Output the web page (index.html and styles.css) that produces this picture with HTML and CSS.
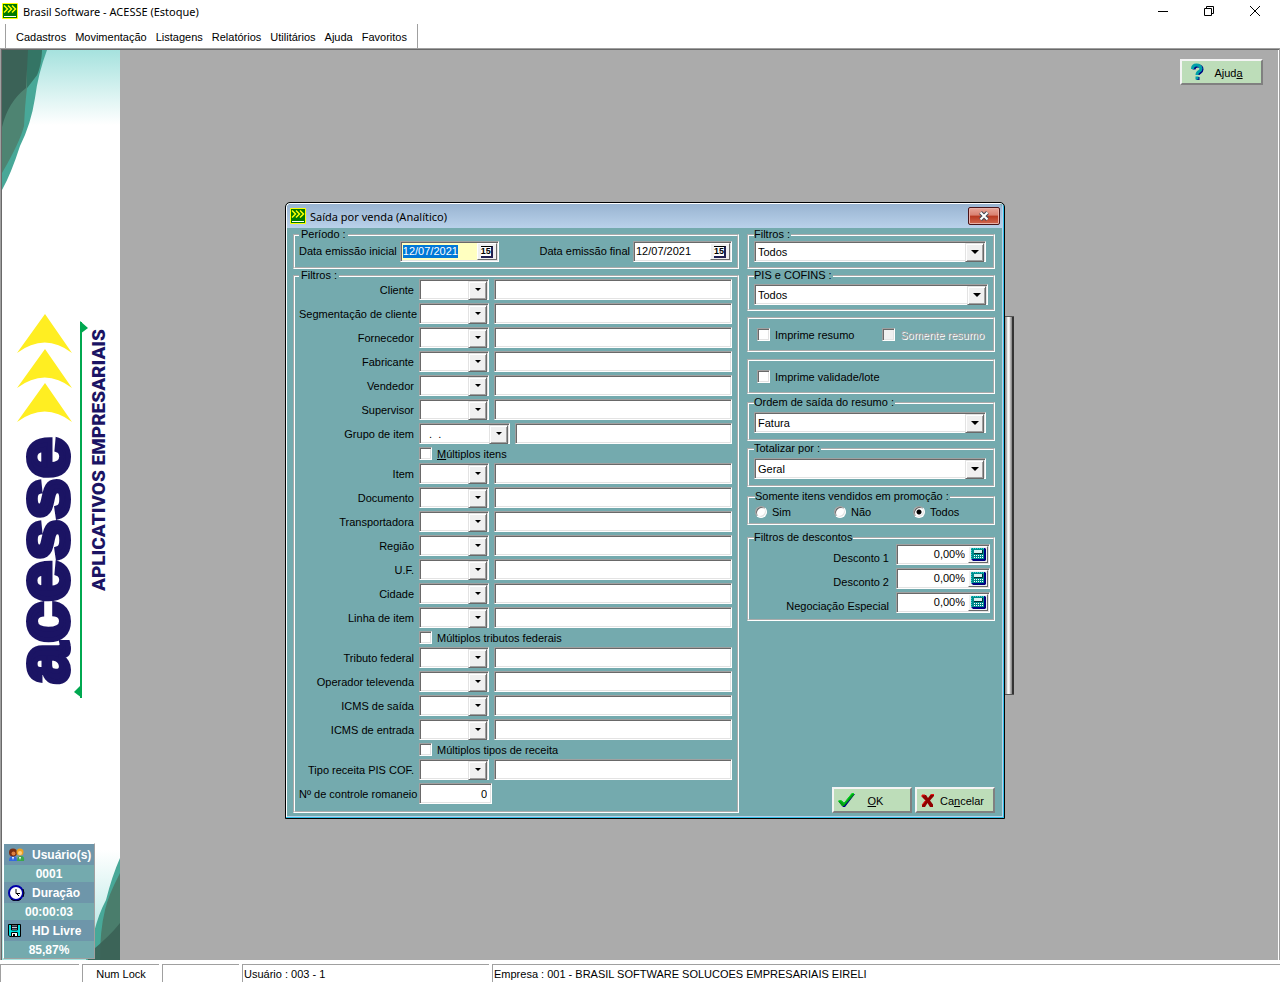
FILE: index.html
```html
<!DOCTYPE html>
<html lang="pt-BR">
<head>
<meta charset="UTF-8" />
<meta name="viewport" content="width=device-width, initial-scale=1" />
<title>Brasil Software - ACESSE (Estoque)</title>
<link rel="stylesheet" href="styles.css">
</head>
<body>
  <svg class="defs" aria-hidden="true">
    <symbol id="logo" viewBox="0 0 16 16">
      <rect width="16" height="16" rx="1" fill="#ff0"/>
      <rect x="1" y="1" width="14" height="14" fill="#007a00"/>
      <path d="M2 2.500l3.500 3.500L2 9.500M6 2.500l3.500 3.500L6 9.500M10 2.500l3.500 3.500L10 9.500" fill="none" stroke="#ff0" stroke-width="1.500"/>
      <path d="M2 13.500h12" stroke="#fff"/>
    </symbol>
    <symbol id="calc" viewBox="0 0 15 13">
      <path d="M1 0h13l1 1v11l-1 1H2l-2-2V1z" fill="#000080"/>
      <path d="M0 0h13v11H0z" fill="#008c8c"/>
      <path d="M0.500 11V0.500H13" fill="none" stroke="#30d0d0" stroke-dasharray="1 1"/>
      <path d="M3 2h8v3H3z" fill="#d8f0f0"/>
      <path d="M3 5.500h8.500V2" fill="none" stroke="#003030"/>
      <path d="M3 7.500h9M3 9.500h9" stroke="#fff" stroke-dasharray="1 1"/>
    </symbol>
  </svg>

  <header class="titlebar">
    <svg class="app-icon"><use href="#logo"/></svg>
    <span class="title-text">Brasil Software - ACESSE (Estoque)</span>
    <div class="window-buttons">
      <button type="button" aria-label="Minimizar"><svg width="10" height="10"><path d="M0 5.500h10" stroke="#000"/></svg></button>
      <button type="button" aria-label="Restaurar"><svg width="10" height="10" fill="none" stroke="#000"><path d="M0.500 2.500h7v7h-7zM2.500 2.500v-2h7v7h-2"/></svg></button>
      <button type="button" aria-label="Fechar"><svg width="10" height="10"><path d="M0 0l10 10M10 0L0 10" stroke="#000"/></svg></button>
    </div>
  </header>

  <nav class="menubar">
    <a href="#">Cadastros</a>
    <a href="#">Movimentação</a>
    <a href="#">Listagens</a>
    <a href="#">Relatórios</a>
    <a href="#">Utilitários</a>
    <a href="#">Ajuda</a>
    <a href="#">Favoritos</a>
  </nav>

  <main class="workspace">
    <aside class="sidebar">
      <svg class="art art-top" viewBox="0 0 118 140" aria-hidden="true">
        <path d="M0 0H45Q36 24 33 48Q29 74 18 96Q9 124 0 140Z" fill="#48a898"/>
        <path d="M0 0H40Q39 16 35 25L25 38Q23 54 22 76Q18 92 0 123Z" fill="#4e8472"/>
        <path d="M25 0H40Q39 16 35 25L25 38Z" fill="#347565"/>
        <path d="M0 0H26L24 38Q6 52 0 77Z" fill="#3b6257"/>
      </svg>
      <svg class="brand" width="118" height="390" role="img" aria-label="acesse aplicativos empresariais">
        <g fill="#ffee22">
          <path d="M43 4L70 43Q43 22 15 43Z"/>
          <path d="M43 39L70 78Q43 57 15 78Z"/>
          <path d="M43 73L70 112Q43 91 15 112Z"/>
        </g>
        <path d="M79 12V388" stroke="#00a850" stroke-width="2"/>
        <path d="M78 11l8 7-8 6zM80 388l-8-6 8-8z" fill="#00a850"/>
        <text class="brand-name" transform="translate(66 374) rotate(-90)">acesse</text>
        <text class="brand-line" transform="translate(103 281) rotate(-90)">APLICATIVOS EMPRESARIAIS</text>
      </svg>
      <svg class="art art-bottom" viewBox="0 0 118 140" aria-hidden="true">
        <path d="M118 38Q110 56 104 80Q97 93 92 112L84 140H118Z" fill="#48a898"/>
        <path d="M118 53Q106 76 103 90Q98 110 98 140H118Z" fill="#4a7d6c"/>
        <path d="M118 103Q108 116 86 134V140H118Z" fill="#3b6257" opacity=".9"/>
      </svg>
      <dl class="info">
        <dt>
          <svg width="17" height="14" viewBox="0 0 17 14"><path d="M1 13q0-5 4-5t4 5z" fill="#3468e0"/><path d="M9 13q0-5 4-5t3 5z" fill="#3aa84a"/><circle cx="5" cy="4.500" r="4" fill="#7a2e12"/><circle cx="5.500" cy="5.500" r="2" fill="#e08040"/><circle cx="12" cy="4" r="3.500" fill="#f0a020"/><circle cx="12" cy="5" r="2" fill="#ffd080"/><path d="M4 9l1 3 1-3zM11 9l1 3 1-3z" fill="#fff"/></svg>
          Usuário(s)
        </dt>
        <dd>0001</dd>
        <dt>
          <svg width="17" height="16" viewBox="0 0 17 16"><circle cx="8" cy="8" r="7" fill="#fff" stroke="#0000a8" stroke-width="2"/><path d="M3 14Q8 18 13 14M15 4Q17 8 15 12" fill="none" stroke="#000"/><path d="M8 4v4.500h4M9 9l2 2" fill="none" stroke="#000"/></svg>
          Duração
        </dt>
        <dd>00:00:03</dd>
        <dt>
          <svg width="17" height="14" viewBox="0 0 17 14"><path d="M0.500 0.500h12v12H2l-1.500-1z" fill="#00e0e0" stroke="#000"/><path d="M3.500 1h6v5h-6z" fill="#ccc" stroke="#000"/><path d="M4 2.500h5M4 4.500h5" stroke="#224"/><path d="M3.500 8.500h6v4h-6z" fill="#fff" stroke="#000"/><path d="M5 10h2v2H5z"/></svg>
          HD Livre
        </dt>
        <dd>85,87%</dd>
      </dl>
    </aside>

    <section class="desktop">
      <button type="button" class="btn help">
        <svg width="14" height="18" viewBox="0 0 14 18"><path d="M4 6.500Q4 3 8 3T12 6.500Q12 8 10 9.500T8 12M8 14v3" fill="none" stroke="#000080" stroke-width="3"/><path d="M2.500 6Q2.500 2 6.500 2T11 5.500Q11 7.500 9 8.500T7 12M7 13.500v3" fill="none" stroke="#00a0a8" stroke-width="3"/></svg>
        <span>Ajud<u>a</u></span>
      </button>
    </section>

    <div class="back-window"></div>

    <form class="dialog" id="saidaForm">
      <div class="dialog-title">
        <svg class="app-icon"><use href="#logo"/></svg>
        <h1>Saída por venda (Analítico)</h1>
        <button type="button" class="close" aria-label="Fechar"><svg width="12" height="10" viewBox="0 0 12 10"><path d="M2.500 1.500l7 7M9.500 1.500l-7 7" stroke="#444a58" stroke-width="4"/><path d="M2.500 1.500l7 7M9.500 1.500l-7 7" stroke="#fff" stroke-width="2"/></svg></button>
      </div>

      <div class="dialog-body">
        <div class="col-left">
          <fieldset class="periodo">
            <legend>Período :</legend>
            <div class="dates">
              <label for="dataInicial">Data emissão inicial</label>
              <span class="field date active"><input type="text" id="dataInicial" value="12/07/2021"><button type="button" aria-label="Calendário"><span class="cal">15</span></button></span>
              <label for="dataFinal" class="second">Data emissão final</label>
              <span class="field date"><input type="text" id="dataFinal" value="12/07/2021"><button type="button" aria-label="Calendário"><span class="cal">15</span></button></span>
            </div>
          </fieldset>

          <fieldset class="filtros">
            <legend>Filtros :</legend>
            <div class="rows">
              <div class="row"><label for="cliente">Cliente</label><span class="combo"><select id="cliente"><option></option></select></span><input type="text" class="field" aria-label="Nome do cliente"></div>
              <div class="row"><label for="segmentacao">Segmentação de cliente</label><span class="combo"><select id="segmentacao"><option></option></select></span><input type="text" class="field" aria-label="Nome da segmentação"></div>
              <div class="row"><label for="fornecedor">Fornecedor</label><span class="combo"><select id="fornecedor"><option></option></select></span><input type="text" class="field" aria-label="Nome do fornecedor"></div>
              <div class="row"><label for="fabricante">Fabricante</label><span class="combo"><select id="fabricante"><option></option></select></span><input type="text" class="field" aria-label="Nome do fabricante"></div>
              <div class="row"><label for="vendedor">Vendedor</label><span class="combo"><select id="vendedor"><option></option></select></span><input type="text" class="field" aria-label="Nome do vendedor"></div>
              <div class="row"><label for="supervisor">Supervisor</label><span class="combo"><select id="supervisor"><option></option></select></span><input type="text" class="field" aria-label="Nome do supervisor"></div>
              <div class="row"><label for="grupo">Grupo de item</label><span class="combo medium"><select id="grupo"><option>&nbsp; .&nbsp; .</option></select></span><input type="text" class="field" aria-label="Nome do grupo"></div>
              <label class="check indent"><input type="checkbox"><span><u>M</u>últiplos itens</span></label>
              <div class="row"><label for="item">Item</label><span class="combo"><select id="item"><option></option></select></span><input type="text" class="field" aria-label="Nome do item"></div>
              <div class="row"><label for="documento">Documento</label><span class="combo"><select id="documento"><option></option></select></span><input type="text" class="field" aria-label="Nome do documento"></div>
              <div class="row"><label for="transportadora">Transportadora</label><span class="combo"><select id="transportadora"><option></option></select></span><input type="text" class="field" aria-label="Nome da transportadora"></div>
              <div class="row"><label for="regiao">Região</label><span class="combo"><select id="regiao"><option></option></select></span><input type="text" class="field" aria-label="Nome da região"></div>
              <div class="row"><label for="uf">U.F.</label><span class="combo"><select id="uf"><option></option></select></span><input type="text" class="field" aria-label="Nome da U.F."></div>
              <div class="row"><label for="cidade">Cidade</label><span class="combo"><select id="cidade"><option></option></select></span><input type="text" class="field" aria-label="Nome da cidade"></div>
              <div class="row"><label for="linha">Linha de item</label><span class="combo"><select id="linha"><option></option></select></span><input type="text" class="field" aria-label="Nome da linha"></div>
              <label class="check indent"><input type="checkbox"><span>Múltiplos tributos federais</span></label>
              <div class="row"><label for="tributo">Tributo federal</label><span class="combo"><select id="tributo"><option></option></select></span><input type="text" class="field" aria-label="Nome do tributo"></div>
              <div class="row"><label for="operador">Operador televenda</label><span class="combo"><select id="operador"><option></option></select></span><input type="text" class="field" aria-label="Nome do operador"></div>
              <div class="row"><label for="icmsSaida">ICMS de saída</label><span class="combo"><select id="icmsSaida"><option></option></select></span><input type="text" class="field" aria-label="Descrição do ICMS de saída"></div>
              <div class="row"><label for="icmsEntrada">ICMS de entrada</label><span class="combo"><select id="icmsEntrada"><option></option></select></span><input type="text" class="field" aria-label="Descrição do ICMS de entrada"></div>
              <label class="check indent"><input type="checkbox"><span>Múltiplos tipos de receita</span></label>
              <div class="row"><label for="receita">Tipo receita PIS COF.</label><span class="combo"><select id="receita"><option></option></select></span><input type="text" class="field" aria-label="Nome do tipo de receita"></div>
              <div class="row"><label for="romaneio">Nº de controle romaneio</label><input type="text" class="field number" id="romaneio" value="0"></div>
            </div>
          </fieldset>
        </div>

        <div class="col-right">
          <fieldset class="g-filtro">
            <legend>Filtros :</legend>
            <span class="combo wide"><select aria-label="Filtros"><option>Todos</option></select></span>
          </fieldset>

          <fieldset class="g-pis">
            <legend>PIS e COFINS :</legend>
            <span class="combo wide"><select aria-label="PIS e COFINS"><option>Todos</option></select></span>
          </fieldset>

          <div class="box">
            <label class="check"><input type="checkbox"><span>Imprime resumo</span></label>
            <label class="check disabled"><input type="checkbox" disabled><span>Somente resumo</span></label>
          </div>

          <div class="box">
            <label class="check"><input type="checkbox"><span>Imprime validade/lote</span></label>
          </div>

          <fieldset class="g-ordem">
            <legend>Ordem de saída do resumo :</legend>
            <span class="combo wide"><select aria-label="Ordem de saída do resumo"><option>Fatura</option></select></span>
          </fieldset>

          <fieldset class="g-ordem">
            <legend>Totalizar por :</legend>
            <span class="combo wide"><select aria-label="Totalizar por"><option>Geral</option></select></span>
          </fieldset>

          <fieldset class="g-promo">
            <legend>Somente itens vendidos em promoção :</legend>
            <div class="radios">
              <label class="check"><input type="radio" name="promo"><span>Sim</span></label>
              <label class="check"><input type="radio" name="promo"><span>Não</span></label>
              <label class="check"><input type="radio" name="promo" checked><span>Todos</span></label>
            </div>
          </fieldset>

          <fieldset class="g-desc">
            <legend>Filtros de descontos</legend>
            <div class="rows">
              <div class="row"><label for="desc1">Desconto 1</label><span class="field calc"><input type="text" id="desc1" value="0,00%"><button type="button" aria-label="Calculadora"><svg width="15" height="13"><use href="#calc"/></svg></button></span></div>
              <div class="row"><label for="desc2">Desconto 2</label><span class="field calc"><input type="text" id="desc2" value="0,00%"><button type="button" aria-label="Calculadora"><svg width="15" height="13"><use href="#calc"/></svg></button></span></div>
              <div class="row"><label for="negociacao">Negociação Especial</label><span class="field calc"><input type="text" id="negociacao" value="0,00%"><button type="button" aria-label="Calculadora"><svg width="15" height="13"><use href="#calc"/></svg></button></span></div>
            </div>
          </fieldset>

          <div class="actions">
            <button type="submit" class="btn">
              <svg width="17" height="15" viewBox="0 0 17 15"><path d="M1 9l3-1 2 2L14 1h3L7 14H5z" fill="#000080"/><path d="M0 8l3-1 3 3L14 0h2v2L6 13H4z" fill="#00a010"/><path d="M0.500 8l2.500-0.500 3 3L14 0.500h2" fill="none" stroke="#00e020"/></svg>
              <span class="ok"><u>O</u>K</span>
            </button>
            <button type="button" class="btn">
              <svg width="14" height="15" viewBox="0 0 14 15"><path d="M1 2h4l2 3 3-4h3v2L9 7.500l3 4V14H9l-2.500-4L4 14H1v-2l3.500-4.500L1 4z" fill="#900000"/><path d="M1 4V2h3M10 1.500h3M1 12l3.500-4.500" fill="none" stroke="#f01010"/></svg>
              <span>Ca<u>n</u>celar</span>
            </button>
          </div>
        </div>
      </div>
    </form>
  </main>

  <footer class="statusbar">
    <span></span>
    <span class="center">Num Lock</span>
    <span></span>
    <span class="user">Usuário : 003 - 1</span>
    <span class="company">Empresa : 001 - BRASIL SOFTWARE SOLUCOES EMPRESARIAIS EIRELI</span>
  </footer>

<script>
  const dataInicial = document.getElementById('dataInicial');
  dataInicial.focus();
  dataInicial.select();

  document.getElementById('saidaForm').addEventListener('submit', e => {
    e.preventDefault();
  });
</script>
</body>
</html>
```
FILE: styles.css
```css
* {
  box-sizing: border-box;
}
body {
  margin: 0;
  min-height: 100vh;
  display: flex;
  flex-direction: column;
  background: #fff;
  color: #000;
  font: 11px/13px "Liberation Sans", Arial, sans-serif;
}
input, select, button {
  font: inherit;
  color: inherit;
  margin: 0;
  padding: 0;
  border-radius: 0;
  outline: none;
}
.defs {
  position: absolute;
  width: 0;
  height: 0;
}

/* Barra de título e menu */
.titlebar {
  display: flex;
  align-items: center;
  height: 24px;
  padding: 0 1px 2px 2px;
}
.app-icon {
  width: 16px;
  height: 16px;
  flex: none;
}
.title-text {
  margin-left: 5px;
  font-family: "Noto Sans", sans-serif;
  font-size: 11px;
}
.window-buttons {
  display: flex;
  margin-left: auto;
}
.window-buttons button {
  width: 46px;
  height: 22px;
  padding: 2px 2px 0 0;
  border: none;
  background: none;
}
.menubar {
  display: flex;
  align-items: center;
  align-self: flex-start;
  gap: 9px;
  height: 24px;
  margin-left: 5px;
  padding: 2px 10px 0;
  border-left: 1px solid #a0a0a0;
  border-right: 1px solid #a0a0a0;
}
.menubar a {
  color: #000;
  text-decoration: none;
}

/* Área de trabalho */
.workspace {
  position: relative;
  flex: 1;
  display: flex;
  min-height: 800px;
  border: 1px solid #a0a0a0;
  border-width: 1px 1px 0 1px;
  box-shadow: inset 1px 1px #696969;
  padding: 1px 0 0 1px;
}
.desktop {
  flex: 1;
  margin-right: 1px;
  background: #ababab;
}
.sidebar {
  position: relative;
  width: 118px;
  display: flex;
  align-items: center;
  background: linear-gradient(#a6e2de, #fff 75px, #fff calc(100% - 110px), #a6e2de);
}
.art {
  position: absolute;
  left: 0;
  width: 118px;
  height: 140px;
}
.art-top { top: 0; }
.art-bottom { bottom: 0; }
.brand {
  overflow: visible;
}
.brand-name {
  font: bold 74px "Liberation Sans", Arial, sans-serif;
  fill: #1b1464;
  stroke: #1b1464;
  stroke-width: 5px;
}
.brand-line {
  font: 900 19px Roboto, sans-serif;
  fill: #1b1464;
}
.info {
  position: absolute;
  left: 1px;
  bottom: 1px;
  width: 92px;
  margin: 0;
  border: 1px solid #a0a0a0;
  border-color: #fff #a0a0a0 #a0a0a0 #fff;
  color: #fff;
  font: bold 12px/18px "Liberation Sans", Arial, sans-serif;
}
.info dt {
  display: flex;
  align-items: center;
  gap: 7px;
  height: 21px;
  padding-left: 4px;
  background: #6e96aa;
  white-space: nowrap;
}
.info dd {
  margin: 0;
  height: 17px;
  background: #74aaae;
  text-align: center;
}

/* Botões */
.btn {
  display: flex;
  align-items: center;
  height: 26px;
  width: 80px;
  padding: 0 4px;
  background: #bdddb9;
  border: 2px solid;
  border-color: #f4f4f4 #808080 #808080 #f4f4f4;
}
.btn span {
  flex: 1;
  padding-top: 2px;
  text-align: center;
}
.btn .ok {
  padding-right: 10px;
}
.help {
  position: absolute;
  top: 10px;
  right: 16px;
  width: 83px;
  padding: 0 8px;
}

/* Janela */
.back-window {
  position: absolute;
  top: 267px;
  left: 989px;
  width: 24px;
  height: 379px;
  border: 1px solid #555;
  border-width: 1px 0;
  background: linear-gradient(to left, #333 2px, #888 2px, #999 3px, #fff 5px, #ddd 7px, #888 8px, #ababab 9px);
}
.dialog {
  position: absolute;
  top: 153px;
  left: 284px;
  width: 720px;
  border: 1px solid #000;
  border-radius: 5px 5px 0 0;
  padding: 1px 2px 2px 1px;
  background: #74aaae;
  box-shadow: inset -1px -1px #30c0e8, inset 1px 1px #fff, inset -2px -2px #b9d1ea;
}
.dialog-title {
  display: flex;
  align-items: center;
  height: 24px;
  padding: 0 2px 0 3px;
  background: linear-gradient(#99b4d1, #b9d1ea);
  border-radius: 4px 4px 0 0;
}
.dialog-title h1 {
  margin: 0 auto 0 4px;
  padding-top: 1px;
  font: 11px/14px "Noto Sans", sans-serif;
}
.close {
  display: flex;
  align-items: center;
  justify-content: center;
  width: 32px;
  height: 18px;
  border: 1px solid #4a1418;
  border-radius: 2px;
  background: linear-gradient(#e8a598, #d98070 45%, #b83820 50%, #d06850);
  box-shadow: inset 0 0 0 1px #e8b0a8;
}
.dialog-body {
  display: flex;
  gap: 8px;
  padding: 0 7px 3px 6px;
}
.col-left {
  flex: 1;
}
.col-right {
  display: flex;
  flex-direction: column;
  width: 248px;
}

/* Grupos */
fieldset {
  margin: 0;
  min-width: 0;
  border: 2px groove #fff;
}
legend {
  line-height: 13px;
  padding: 0 2px;
}
.col-right legend {
  padding: 0 1px 0 0;
}
.periodo, .filtros {
  padding: 0 5px 5px 4px;
}
.filtros {
  padding-bottom: 7px;
}
.filtros .rows {
  margin-top: -3px;
}
.dates {
  display: flex;
  align-items: center;
  gap: 3px;
}
.dates .second {
  margin-left: auto;
}
.rows {
  display: flex;
  flex-direction: column;
  gap: 3px;
}
.row {
  display: flex;
  align-items: center;
  gap: 5px;
}
.row label {
  width: 115px;
  padding-top: 2px;
  text-align: right;
  white-space: nowrap;
}
.indent {
  margin-left: 120px;
}

/* Campos */
.field, select {
  height: 21px;
  background: #fff;
  border: 1px solid;
  border-color: #a0a0a0 #fff #fff #a0a0a0;
  box-shadow: inset 1px 1px #696969, inset -1px -1px #e3e3e3;
}
.row > .field {
  flex: 1;
  min-width: 0;
}
.row > .number {
  flex: none;
  width: 73px;
  padding-right: 4px;
  text-align: right;
}
.date, .calc {
  display: flex;
  width: 99px;
  padding: 1px;
}
.date input, .calc input {
  flex: 1;
  width: 0;
  min-width: 0;
  border: none;
  background: none;
  padding-left: 1px;
}
.date.active {
  background: #ffffc0;
}
.date input::selection {
  background: #0078d7;
  color: #fff;
}
.date button, .calc button {
  display: flex;
  align-items: center;
  justify-content: center;
  width: 20px;
  background: #f0f0f0;
  border: 1px solid;
  border-color: #fff #696969 #696969 #fff;
}
.cal {
  border: 1px solid #000;
  border-color: #000 #202050 #202050;
  border-width: 1px 2px 2px 0;
  background: #fff;
  font: bold 9px/9px "Liberation Sans", Arial, sans-serif;
}
.row > .calc {
  flex: none;
  width: 94px;
}
.calc input {
  text-align: right;
  padding-right: 3px;
}
.combo {
  position: relative;
  display: block;
  flex: none;
  width: 70px;
}
.medium {
  width: 91px;
}
.combo select {
  display: block;
  appearance: none;
  width: 100%;
  padding: 1px 0 0 3px;
}
.combo::before {
  content: "";
  position: absolute;
  top: 2px;
  right: 2px;
  width: 17px;
  height: 17px;
  background: #f0f0f0;
  border: 1px solid;
  border-color: #e3e3e3 #696969 #696969 #e3e3e3;
  box-shadow: inset 1px 1px #fff, inset -1px -1px #a0a0a0;
  pointer-events: none;
}
.combo::after {
  content: "";
  position: absolute;
  top: 9px;
  right: 8px;
  border: 3px solid transparent;
  border-top-color: #000;
  border-bottom: none;
  pointer-events: none;
}
.combo.wide {
  width: auto;
}
.wide::after {
  right: 7px;
  border-width: 4px 4px 0;
}

/* Caixas de marcação */
.check {
  display: flex;
  align-items: center;
  gap: 5px;
  height: 13px;
  white-space: nowrap;
}
.check span {
  padding-top: 2px;
}
.check input {
  appearance: none;
  width: 13px;
  height: 13px;
  background: #fff;
  border: 1px solid;
  border-color: #a0a0a0 #fff #fff #a0a0a0;
  box-shadow: inset 1px 1px #696969, inset -1px -1px #e3e3e3;
}
.check input[type="checkbox"]:checked {
  background: #333;
}
.check input[type="radio"] {
  width: 12px;
  height: 12px;
  border-radius: 50%;
}
.check input[type="radio"]:checked {
  background: radial-gradient(#000 2px, #fff 3px);
}
.check input:disabled {
  background: #f0f0f0;
}
.disabled {
  color: #a0a0a0;
  text-shadow: 1px 1px #fff;
}

/* Coluna da direita */
.col-right fieldset {
  padding: 0 6px 5px 5px;
}
.col-right .g-pis {
  padding: 2px 5px 4px 5px;
}
.box {
  display: flex;
  align-items: center;
  justify-content: space-between;
  height: 35px;
  margin-top: 6px;
  padding: 0 9px 0 8px;
  border: 2px groove #fff;
}
.box + .box {
  margin-top: 7px;
}
.col-right .g-ordem {
  margin-top: 2px;
  padding: 3px 7px 6px 5px;
}
.g-ordem + .g-ordem {
  margin-top: 1px;
}
.col-right .g-filtro {
  padding-right: 7px;
}
.col-right .g-promo {
  margin-top: 3px;
  padding: 2px 6px 5px 6px;
}
.g-promo .radios {
  display: grid;
  grid-template-columns: 79px 79px auto;
}
.col-right .g-desc {
  margin-top: 6px;
  padding: 0 3px 6px 5px;
}
.g-desc .row {
  gap: 7px;
}
.g-desc .row label {
  flex: 1;
  padding-top: 8px;
}
.actions {
  display: flex;
  justify-content: flex-end;
  gap: 3px;
  margin-top: auto;
}

/* Barra de status */
.statusbar {
  display: flex;
  gap: 3px;
  height: 22px;
  padding-top: 4px;
}
.statusbar span {
  width: 77px;
  padding: 3px 1px 0;
  border-top: 1px solid #a0a0a0;
  border-left: 1px solid #a0a0a0;
  white-space: nowrap;
}
.statusbar span:first-child {
  width: 79px;
}
.statusbar .center {
  text-align: center;
}
.statusbar .user {
  width: 247px;
}
.statusbar .company {
  flex: 1;
}
```
